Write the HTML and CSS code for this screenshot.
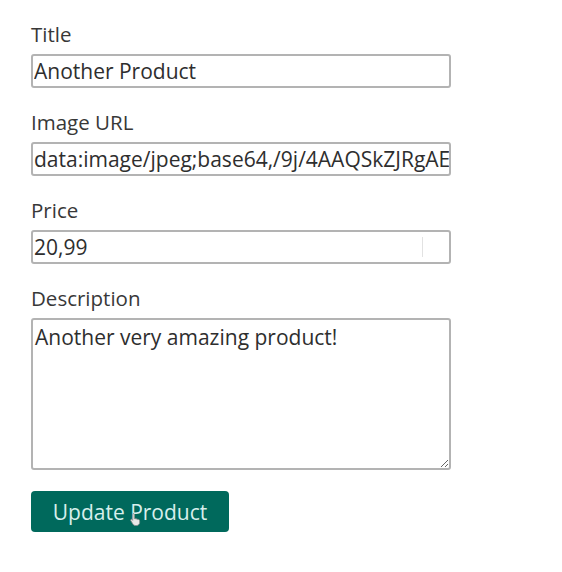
FILE: index.html
```html
<!DOCTYPE html>
<html>
<head>
<meta charset="utf-8">
<link rel="stylesheet" href="styles.css">
</head>
<body>
<form class="product-form">
  <div class="form-control">
    <label class="label" for="title">Title</label>
    <input class="field" type="text" id="title" value="Another Product">
  </div>
  <div class="form-control">
    <label class="label" for="imageUrl">Image URL</label>
    <input class="field" type="text" id="imageUrl" value="data:image/jpeg;base64,/9j/4AAQSkZJRgAEAQAAAQABAAD">
  </div>
  <div class="form-control">
    <label class="label" for="price">Price</label>
    <div class="price-wrap">
      <input class="field" type="text" id="price" value="20,99">
      <span class="spin-line"></span>
    </div>
  </div>
  <div class="form-control">
    <label class="label" for="description">Description</label>
    <textarea class="field area" id="description">Another very amazing product!</textarea>
  </div>
  <div class="actions">
    <button class="btn" type="button">Update Product</button>
    <svg class="cursor" width="14" height="14" viewBox="0 0 14 14"><path d="M4 1.5c.8 0 1.3.5 1.3 1.2v4l.6-.2c.6 0 1 .3 1.1.7.3-.3.6-.4 1-.3.5.1.8.4.9.8.3-.2.6-.2.9-.1.6.2.8.7.8 1.3v1.6c0 1.6-1.2 3-3 3H6.3c-1 0-1.8-.5-2.3-1.3L1.8 8.6c-.3-.5-.1-1 .3-1.2.4-.2.9-.1 1.2.3l.4.6V2.7c0-.7.5-1.2.3-1.2z" fill="#e8e8e8" stroke="#8a8a8a" stroke-width=".8"/></svg>
  </div>
</form>
</body>
</html>
```

FILE: styles.css
```css
html, body {
  margin: 0;
  padding: 0;
  background: #ffffff;
}

body {
  font-family: "Open Sans", "Noto Sans", sans-serif;
  color: #333333;
}

.product-form {
  width: 420px;
  padding: 21px 0 0 31px;
}

.form-control {
  display: flex;
  flex-direction: column;
  margin-bottom: 21px;
}

.label {
  font-size: 20.5px;
  line-height: 27px;
  margin-bottom: 6px;
  color: #383838;
}

.field {
  box-sizing: border-box;
  width: 420px;
  height: 34px;
  margin: 0;
  padding: 0 0 0 1px;
  font-family: "Open Sans", "Noto Sans", sans-serif;
  font-size: 21px;
  color: #2e2e2e;
  border: 2px solid #b3b3b3;
  border-radius: 3px;
  background: #fff;
  outline: none;
}

.price-wrap {
  position: relative;
  display: flex;
}

.spin-line {
  position: absolute;
  left: 391px;
  top: 7px;
  width: 1px;
  height: 20px;
  background: #e2e2e2;
}

.area {
  height: 152px;
  padding: 3px 2px;
  line-height: 1.35;
  resize: vertical;
}

.actions {
  position: relative;
  display: flex;
}

.btn {
  width: 198px;
  height: 41px;
  border: none;
  border-radius: 4px;
  background: #00695c;
  color: #d8efec;
  font-family: "Open Sans", "Noto Sans", sans-serif;
  font-size: 21px;
  padding: 0;
}

.cursor {
  position: absolute;
  left: 98px;
  top: 21px;
}
```
